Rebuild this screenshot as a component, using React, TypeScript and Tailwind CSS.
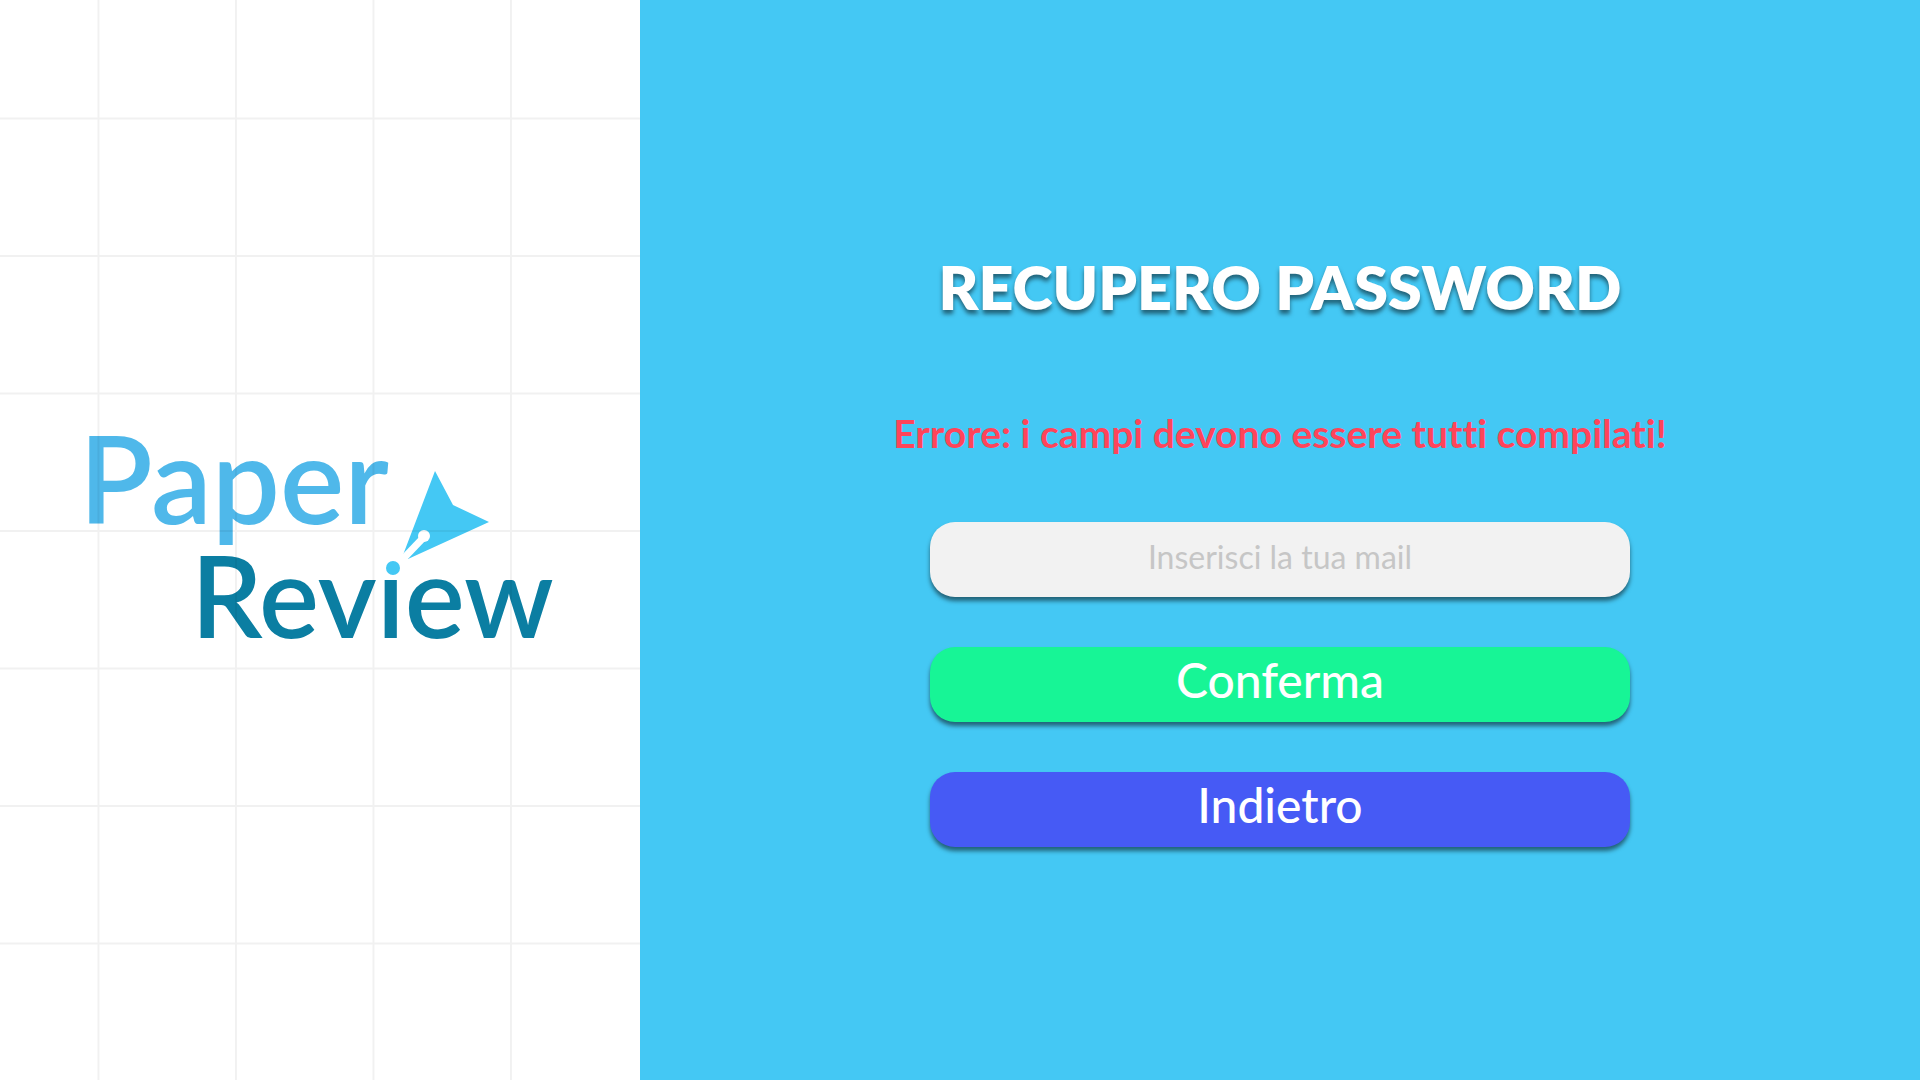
import React from 'react';

const COLUMNS = [197, 472, 747, 1022];
const ROWS = [237, 512, 787, 1062, 1337, 1612, 1887];

function PaperGrid() {
  return (
    <svg
      aria-hidden="true"
      viewBox="0 0 1280 2160"
      preserveAspectRatio="xMidYMid slice"
      className="pointer-events-none absolute inset-0 h-full w-full"
      stroke="#000000"
      strokeOpacity="0.055"
      strokeWidth="4"
      fill="none"
    >
      <path d={COLUMNS.map((x) => `M${x} 0V2160`).join('') + ROWS.map((y) => `M0 ${y}H1280`).join('')} />
    </svg>
  );
}

function Logo() {
  return (
    <svg
      role="img"
      aria-label="Paper Review"
      viewBox="0 0 460 200"
      className="w-[460px] max-w-full overflow-visible font-semibold"
    >
      <text x="-11" y="84" fontSize="121" fill="#4fb8ea">
        Paper
      </text>
      <text x="101" y="198" fontSize="113" fill="#0b7ea2">
        Review
      </text>
      {/* The dot of the "i" is the drop of ink under the nib */}
      <rect x="290" y="104" width="26" height="28" fill="#ffffff" />
      <circle cx="303" cy="128" r="7" fill="#44c8f4" />
      <path d="M345 31L363 65L399 82L318 119L313 115Z" fill="#44c8f4" />
      <path d="M312 120L334 97" stroke="#ffffff" strokeWidth="7" />
      <circle cx="334" cy="96" r="6" fill="#ffffff" />
    </svg>
  );
}

export default function App() {
  return (
    <div className="flex min-h-screen font-['Lato',sans-serif] [font-variant-ligatures:none]">
      <aside className="relative flex w-1/3 items-center justify-center bg-white">
        <Logo />
        <PaperGrid />
      </aside>
      <main className="flex w-2/3 flex-col items-center justify-center bg-[#44c8f4]">
        <h1 className="text-center text-[61px] leading-[106px] font-extrabold text-white [text-shadow:0_4px_4px_rgba(0,0,0,0.5)]">
          RECUPERO PASSWORD
        </h1>
        <p role="alert" className="mt-[68px] mb-16 text-center text-[39px] leading-[50px] font-bold text-[#ff445a]">
          Errore: i campi devono essere tutti compilati!
        </p>
        <form className="flex w-full max-w-[700px] flex-col gap-[50px]" onSubmit={(e) => e.preventDefault()}>
          <input
            type="email"
            aria-label="Inserisci la tua mail"
            placeholder="Inserisci la tua mail"
            className="h-[75px] rounded-[25px] bg-[#f2f2f2] px-6 pb-1.5 text-center text-[32px] font-normal text-gray-700 shadow-[0_4px_4px_rgba(0,0,0,0.5)] outline-none placeholder:text-[#c6c6c6]"
          />
          <button
            type="submit"
            className="h-[75px] rounded-[25px] bg-[#17f596] pb-2 text-[48px] leading-none font-medium text-white shadow-[0_4px_4px_rgba(0,0,0,0.5)]"
          >
            Conferma
          </button>
          <button
            type="button"
            className="h-[75px] rounded-[25px] bg-[#465af5] pb-2 text-[48px] leading-none font-medium text-white shadow-[0_4px_4px_rgba(0,0,0,0.5)]"
          >
            Indietro
          </button>
        </form>
      </main>
    </div>
  );
}
